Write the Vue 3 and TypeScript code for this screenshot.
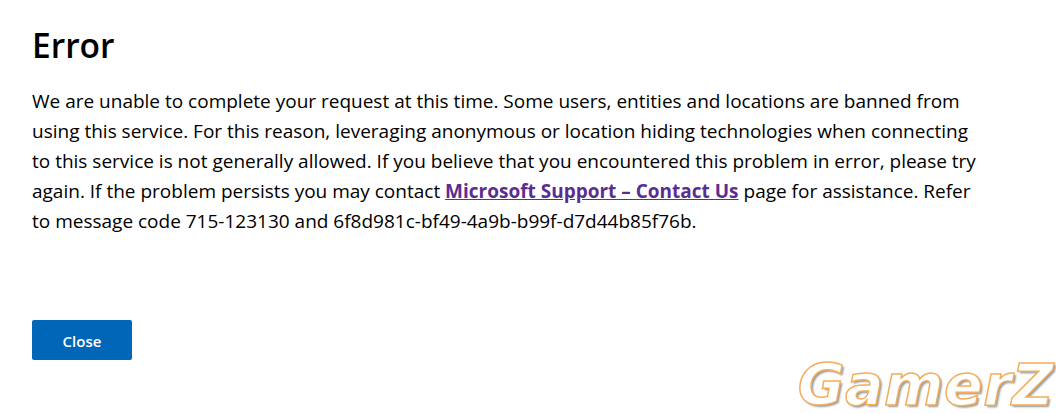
<script setup lang="ts">
</script>

<template>
  <main class="page">
    <h1 class="title">Error</h1>
    <p class="message">We are unable to complete your request at this time. Some users, entities and locations are banned from using this service. For this reason, leveraging anonymous or location hiding technologies when connecting to this service is not generally allowed. If you believe that you encountered this problem in error, please try again. If the problem persists you may contact <a class="link" href="#">Microsoft Support – Contact Us</a> page for assistance. Refer to message code 715-123130 and 6f8d981c-bf49-4a9b-b99f-d7d44b85f76b.</p>
    <button class="close" type="button">Close</button>
    <div class="mark">GamerZ</div>
  </main>
</template>

<style>
html, body { margin: 0; background: #fff; }
</style>

<style scoped>
.page {
  position: relative;
  box-sizing: border-box;
  width: 1056px;
  height: 414px;
  padding: 20px 32px 0;
  overflow: hidden;
  font-family: "Open Sans", "Noto Sans", sans-serif;
  color: #000;
}
.title {
  margin: 0 0 16px;
  font-size: 33.5px;
  line-height: 50px;
  font-weight: 600;
}
.message {
  margin: 0;
  width: 945px;
  font-size: 19px;
  line-height: 30px;
}
.link {
  color: #5c2d91;
  font-weight: 700;
}
.close {
  display: block;
  margin-top: 84px;
  width: 100px;
  height: 40px;
  border: 0;
  border-radius: 2px;
  background: #0067b8;
  color: #fff;
  font: 600 15px/42px "Open Sans", sans-serif;
  padding: 0;
}
.mark {
  position: absolute;
  right: 2px;
  bottom: 1px;
  font: italic 700 57px/56px "DejaVu Sans", sans-serif;
  letter-spacing: 0.6px;
  color: #fff;
  -webkit-text-stroke: 1.5px #f2ae5c;
  text-shadow: 2px 2px 2px #9a9a9a;
}
</style>
